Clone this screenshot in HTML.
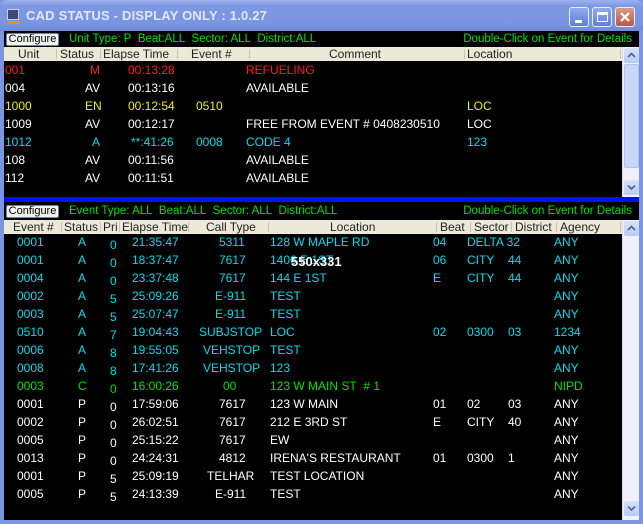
<!DOCTYPE html>
<html><head><meta charset="utf-8"><style>
*{margin:0;padding:0;box-sizing:border-box}
body{width:643px;height:524px;overflow:hidden;background:#7b96e0;font-family:"Liberation Sans",Arial,sans-serif;font-size:12px;position:relative}
.title{position:absolute;left:0;top:0;width:643px;height:31px;background:linear-gradient(#9db3ee,#7c98e2 20%,#7a95df 80%,#6f8ad6);border-radius:7px 7px 0 0}
.title .t{position:absolute;left:26px;top:8px;color:#dfe7fa;font-weight:bold;font-size:13px;letter-spacing:.2px}
.btn{position:absolute;top:7px;width:20px;height:20px;border:1px solid #e8eefc;border-radius:3px;background:linear-gradient(#8eaaf0,#5d7fe0)}
.content{position:absolute;left:4px;top:31px;width:635px;height:489px;background:#000}
.bar{position:absolute;left:0;width:635px;height:16px;color:#00e000;font-size:11.5px}
.cfg{position:absolute;left:2px;top:2px;width:53px;height:13px;background:#f4f3ee;border:1px solid #6b7fb8;border-radius:2px;color:#000;font-size:11px;line-height:11px;text-align:center}
.hdr{position:absolute;left:0;width:618px;height:14px;background:#ece9d8;color:#222;font-size:12px;line-height:14px}
.hdr span,.r span{position:absolute;white-space:nowrap}
.hdr i{position:absolute;top:2px;width:1px;height:10px;background:#c8c4b0}
.sb{position:absolute;left:618px;width:17px;background:#f1f0f9;border-left:1px solid #dcdcec}
.ar{position:absolute;left:1px;width:15px;height:15px;background:linear-gradient(#d8e2fb,#b8cbf6);border-radius:2px}
.ar svg{position:absolute;left:3px;top:4px}
.r{position:absolute;left:0;width:618px;height:18px;font-size:12px;line-height:18px}
.w{color:#fff}.c{color:#00dcec}.g{color:#00e000}.y{color:#f0f000}.rd{color:#ff1a1a}
</style></head><body>
<div class="title">
<div style="position:absolute;left:7px;top:9px;width:12px;height:11px;background:#3a4a70;border:1px solid #ccd"></div>
<div style="position:absolute;left:8px;top:21px;width:12px;height:3px;background:#d0a000"></div>
<div class="t">CAD STATUS - DISPLAY ONLY : 1.0.27</div>
<div class="btn" style="left:569px"><div style="position:absolute;left:5px;top:12px;width:7px;height:3px;background:#fff"></div></div>
<div class="btn" style="left:592px"><div style="position:absolute;left:4px;top:4px;width:11px;height:10px;border:1px solid #fff;border-top-width:3px"></div></div>
<div class="btn" style="left:615px;background:linear-gradient(#d99a8a,#b85a48)"><svg width="18" height="18" style="position:absolute;left:0;top:0"><path d="M5 5L13 13M13 5L5 13" stroke="#fff" stroke-width="2.2"/></svg></div>
</div>
<div class="content">
<div class="bar" style="top:0"><div class="cfg">Configure</div><span style="position:absolute;left:65px;top:2px">Unit Type: P&nbsp; Beat:ALL&nbsp; Sector: ALL&nbsp; District:ALL</span><span style="position:absolute;right:7px;top:2px">Double-Click on Event for Details</span></div>
<div class="hdr" style="top:16px"><span style="left:14px">Unit</span><i style="left:52px"></i><span style="left:56px">Status</span><i style="left:96px"></i><span style="left:99px">Elapse Time</span><i style="left:173px"></i><span style="left:187px">Event #</span><i style="left:245px"></i><span style="left:325px">Comment</span><i style="left:460px"></i><span style="left:463px">Location</span><i style="left:616px"></i></div>
<div class="sb" style="top:16px;height:150px"><div class="ar" style="top:1px"><svg width="9" height="7"><path d="M1 5L4.5 1.5L8 5" stroke="#4d6185" stroke-width="1.6" fill="none"/></svg></div><div style="position:absolute;left:1px;top:17px;width:15px;height:104px;background:#c8d6fa;border:1px solid #b0c4f0;border-radius:2px"></div><div class="ar" style="top:133px"><svg width="9" height="7"><path d="M1 1.5L4.5 5L8 1.5" stroke="#4d6185" stroke-width="1.6" fill="none"/></svg></div></div>
<div class="r rd" style="top:30px"><span style="left:1px">001</span><span style="left:86px">M</span><span style="left:124px">00:13:28</span><span style="left:242px">REFUELING</span></div>
<div class="r w" style="top:48px"><span style="left:1px">004</span><span style="left:81px">AV</span><span style="left:124px">00:13:16</span><span style="left:242px">AVAILABLE</span></div>
<div class="r y" style="top:66px"><span style="left:1px">1000</span><span style="left:81px">EN</span><span style="left:124px">00:12:54</span><span style="left:192px">0510</span><span style="left:463px">LOC</span></div>
<div class="r w" style="top:84px"><span style="left:1px">1009</span><span style="left:81px">AV</span><span style="left:124px">00:12:17</span><span style="left:242px">FREE FROM EVENT # 0408230510</span><span style="left:463px">LOC</span></div>
<div class="r c" style="top:102px"><span style="left:1px">1012</span><span style="left:88px">A</span><span style="left:127px">**:41:26</span><span style="left:192px">0008</span><span style="left:242px">CODE 4</span><span style="left:463px">123</span></div>
<div class="r w" style="top:120px"><span style="left:1px">108</span><span style="left:81px">AV</span><span style="left:124px">00:11:56</span><span style="left:242px">AVAILABLE</span></div>
<div class="r w" style="top:138px"><span style="left:1px">112</span><span style="left:81px">AV</span><span style="left:124px">00:11:51</span><span style="left:242px">AVAILABLE</span></div>
<div style="position:absolute;left:0;top:166px;width:635px;height:5px;background:#0010ff"></div>
<div class="bar" style="top:172px"><div class="cfg">Configure</div><span style="position:absolute;left:65px;top:2px">Event Type: ALL&nbsp; Beat:ALL&nbsp; Sector: ALL&nbsp; District:ALL</span><span style="position:absolute;right:7px;top:2px">Double-Click on Event for Details</span></div>
<div class="hdr" style="top:189px"><span style="left:9px">Event #</span><i style="left:57px"></i><span style="left:60px">Status</span><i style="left:96px"></i><span style="left:99px">Pri</span><i style="left:115px"></i><span style="left:118px">Elapse Time</span><i style="left:184px"></i><span style="left:202px">Call Type</span><i style="left:264px"></i><span style="left:326px">Location</span><i style="left:432px"></i><span style="left:436px">Beat</span><i style="left:466px"></i><span style="left:470px">Sector</span><i style="left:507px"></i><span style="left:511px">District</span><i style="left:552px"></i><span style="left:556px">Agency</span><i style="left:616px"></i></div>
<div class="sb" style="top:189px;height:300px"><div class="ar" style="top:1px"><svg width="9" height="7"><path d="M1 5L4.5 1.5L8 5" stroke="#4d6185" stroke-width="1.6" fill="none"/></svg></div><div class="ar" style="top:281px"><svg width="9" height="7"><path d="M1 1.5L4.5 5L8 1.5" stroke="#4d6185" stroke-width="1.6" fill="none"/></svg></div></div>
<div class="r c" style="top:202px"><span style="left:13px">0001</span><span style="left:74px">A</span><span style="left:106px;top:3px">0</span><span style="left:128px">21:35:47</span><span style="left:215px">5311</span><span style="left:266px">128 W MAPLE RD</span><span style="left:429px">04</span><span style="left:463px">DELTA 32</span><span style="left:550px">ANY</span></div>
<div class="r c" style="top:220px"><span style="left:13px">0001</span><span style="left:74px">A</span><span style="left:106px;top:3px">0</span><span style="left:128px">18:37:47</span><span style="left:215px">7617</span><span style="left:266px">1406 E 1ST</span><span style="left:429px">06</span><span style="left:463px">CITY</span><span style="left:504px">44</span><span style="left:550px">ANY</span></div>
<div style="position:absolute;left:287px;top:223px;color:#fff;font-weight:bold;font-size:13px">550x331</div>
<div class="r c" style="top:238px"><span style="left:13px">0004</span><span style="left:74px">A</span><span style="left:106px;top:3px">0</span><span style="left:128px">23:37:48</span><span style="left:215px">7617</span><span style="left:266px">144 E 1ST</span><span style="left:429px">E</span><span style="left:463px">CITY</span><span style="left:504px">44</span><span style="left:550px">ANY</span></div>
<div class="r c" style="top:256px"><span style="left:13px">0002</span><span style="left:74px">A</span><span style="left:106px;top:3px">5</span><span style="left:128px">25:09:26</span><span style="left:211px">E-911</span><span style="left:266px">TEST</span><span style="left:550px">ANY</span></div>
<div class="r c" style="top:274px"><span style="left:13px">0003</span><span style="left:74px">A</span><span style="left:106px;top:3px">5</span><span style="left:128px">25:07:47</span><span style="left:211px">E-911</span><span style="left:266px">TEST</span><span style="left:550px">ANY</span></div>
<div class="r c" style="top:292px"><span style="left:13px">0510</span><span style="left:74px">A</span><span style="left:106px;top:3px">7</span><span style="left:128px">19:04:43</span><span style="left:195px">SUBJSTOP</span><span style="left:266px">LOC</span><span style="left:429px">02</span><span style="left:463px">0300</span><span style="left:504px">03</span><span style="left:550px">1234</span></div>
<div class="r c" style="top:310px"><span style="left:13px">0006</span><span style="left:74px">A</span><span style="left:106px;top:3px">8</span><span style="left:128px">19:55:05</span><span style="left:199px">VEHSTOP</span><span style="left:266px">TEST</span><span style="left:550px">ANY</span></div>
<div class="r c" style="top:328px"><span style="left:13px">0008</span><span style="left:74px">A</span><span style="left:106px;top:3px">8</span><span style="left:128px">17:41:26</span><span style="left:199px">VEHSTOP</span><span style="left:266px">123</span><span style="left:550px">ANY</span></div>
<div class="r g" style="top:346px"><span style="left:13px">0003</span><span style="left:74px">C</span><span style="left:106px;top:3px">0</span><span style="left:128px">16:00:26</span><span style="left:219px">00</span><span style="left:266px">123 W MAIN ST&nbsp; # 1</span><span style="left:550px">NIPD</span></div>
<div class="r w" style="top:364px"><span style="left:13px">0001</span><span style="left:74px">P</span><span style="left:106px;top:3px">0</span><span style="left:128px">17:59:06</span><span style="left:215px">7617</span><span style="left:266px">123 W MAIN</span><span style="left:429px">01</span><span style="left:463px">02</span><span style="left:504px">03</span><span style="left:550px">ANY</span></div>
<div class="r w" style="top:382px"><span style="left:13px">0002</span><span style="left:74px">P</span><span style="left:106px;top:3px">0</span><span style="left:128px">26:02:51</span><span style="left:215px">7617</span><span style="left:266px">212 E 3RD ST</span><span style="left:429px">E</span><span style="left:463px">CITY</span><span style="left:504px">40</span><span style="left:550px">ANY</span></div>
<div class="r w" style="top:400px"><span style="left:13px">0005</span><span style="left:74px">P</span><span style="left:106px;top:3px">0</span><span style="left:128px">25:15:22</span><span style="left:215px">7617</span><span style="left:266px">EW</span><span style="left:550px">ANY</span></div>
<div class="r w" style="top:418px"><span style="left:13px">0013</span><span style="left:74px">P</span><span style="left:106px;top:3px">0</span><span style="left:128px">24:24:31</span><span style="left:215px">4812</span><span style="left:266px">IRENA'S RESTAURANT</span><span style="left:429px">01</span><span style="left:463px">0300</span><span style="left:504px">1</span><span style="left:550px">ANY</span></div>
<div class="r w" style="top:436px"><span style="left:13px">0001</span><span style="left:74px">P</span><span style="left:106px;top:3px">5</span><span style="left:128px">25:09:19</span><span style="left:203px">TELHAR</span><span style="left:266px">TEST LOCATION</span><span style="left:550px">ANY</span></div>
<div class="r w" style="top:454px"><span style="left:13px">0005</span><span style="left:74px">P</span><span style="left:106px;top:3px">5</span><span style="left:128px">24:13:39</span><span style="left:211px">E-911</span><span style="left:266px">TEST</span><span style="left:550px">ANY</span></div>
</div>
</body></html>
